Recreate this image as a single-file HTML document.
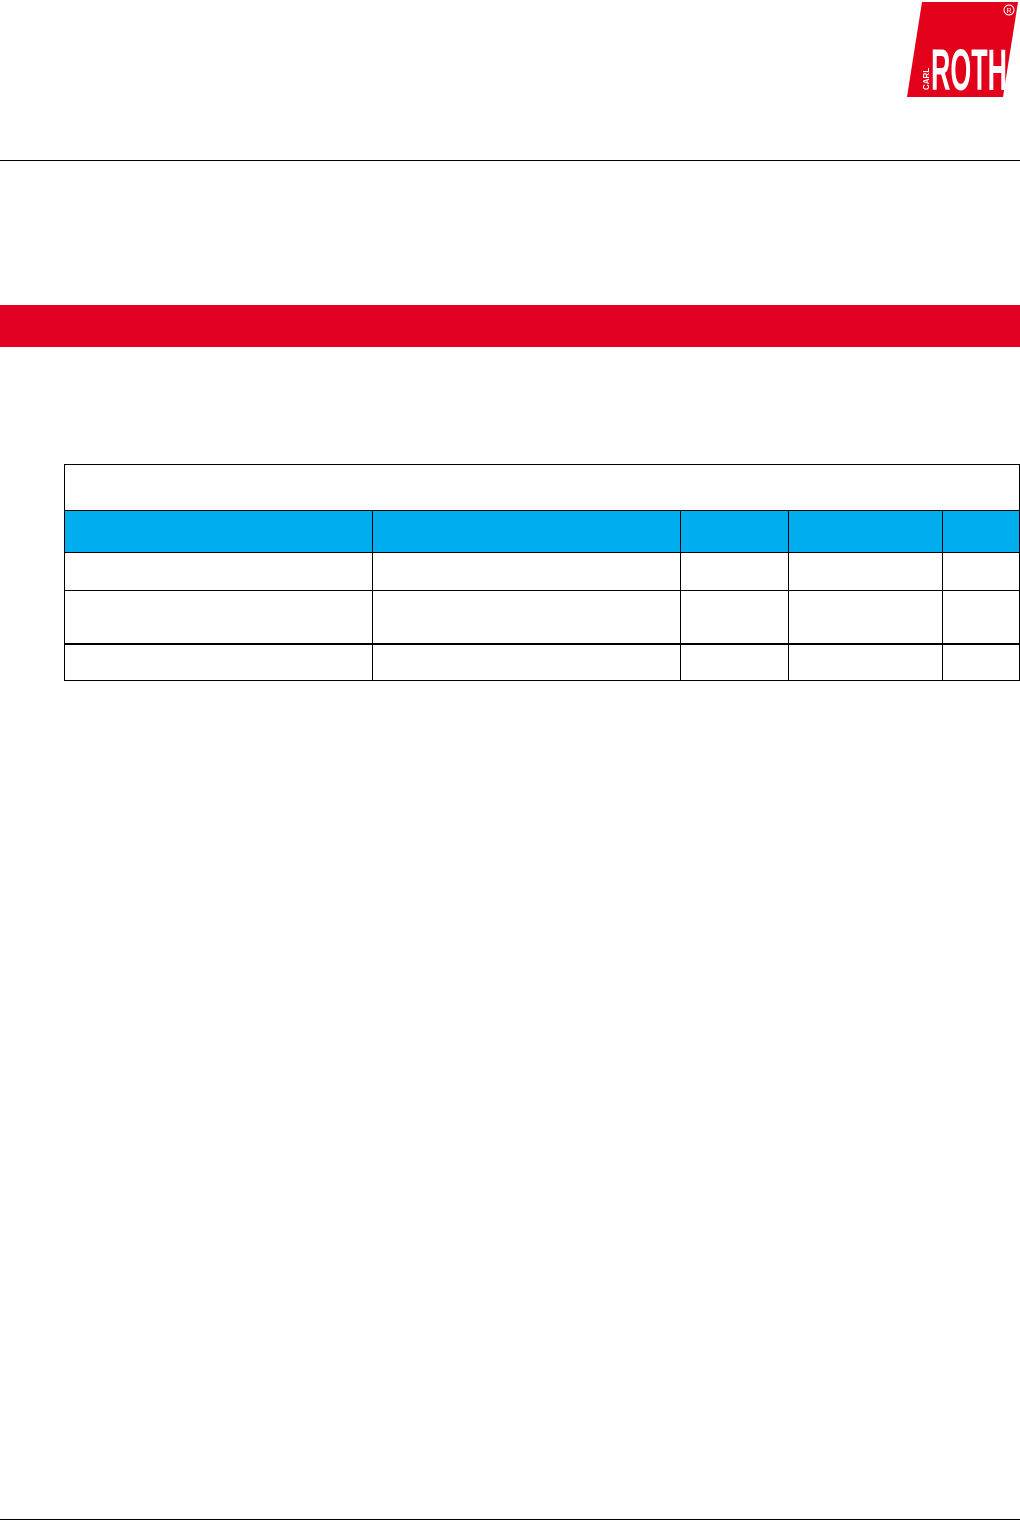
<!DOCTYPE html>
<html><head><meta charset="utf-8"><style>
body{margin:0;width:1020px;height:1520px;background:#fff;position:relative;overflow:hidden;font-family:"Liberation Sans",sans-serif}
.a{position:absolute}
</style></head><body>
<svg class="a" style="left:900px;top:0" width="120" height="100" viewBox="900 0 120 100">
<polygon points="922,2 1018,2 1003,97 907,97" fill="#e2001a"/>
<circle cx="1009" cy="10" r="5" fill="none" stroke="#fff" stroke-width="1"/>
<text x="1009" y="13" font-size="7" fill="#fff" text-anchor="middle" font-family="Liberation Sans">R</text>
<text x="0" y="0" transform="translate(929,90) rotate(-90)" font-size="8" font-weight="bold" fill="#fff" font-family="Liberation Sans">CARL</text>
<text x="931" y="90" font-size="58" font-weight="bold" fill="#fff" font-family="Liberation Sans" textLength="76" lengthAdjust="spacingAndGlyphs">ROTH</text>
</svg>
<div class="a" style="left:0;top:160px;width:1020px;height:1px;background:#000"></div>
<div class="a" style="left:0;top:305px;width:1020px;height:42px;background:#e10022"></div>
<div class="a" style="left:64px;top:464px;width:954px;height:215px;border:1px solid #000"></div>
<div class="a" style="left:65px;top:510px;width:954px;height:43px;background:#00adef;border-top:1px solid #000;border-bottom:1px solid #000;box-sizing:border-box"></div>
<div class="a" style="left:65px;top:590px;width:954px;height:1px;background:#000"></div>
<div class="a" style="left:65px;top:643px;width:954px;height:2px;background:#000"></div>
<div class="a" style="left:372px;top:510px;width:1px;height:170px;background:#000"></div>
<div class="a" style="left:680px;top:510px;width:1px;height:170px;background:#000"></div>
<div class="a" style="left:788px;top:510px;width:1px;height:170px;background:#000"></div>
<div class="a" style="left:942px;top:510px;width:1px;height:170px;background:#000"></div>
<div class="a" style="left:0;top:1519px;width:1020px;height:1px;background:#000"></div>
</body></html>
